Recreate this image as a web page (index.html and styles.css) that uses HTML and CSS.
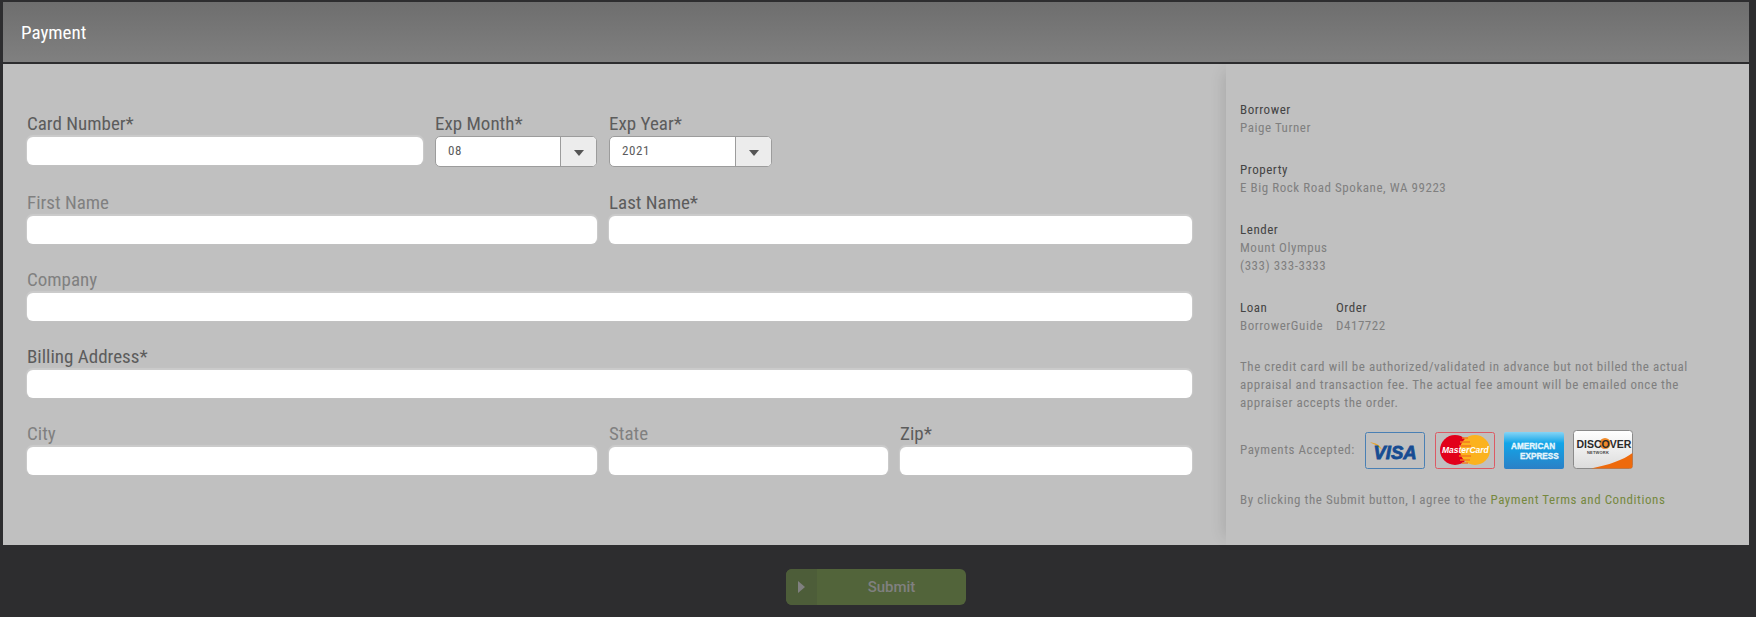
FILE: index.html
```html
<!DOCTYPE html>
<html lang="en">
<head>
  <meta charset="UTF-8">
  <title>Payment</title>
  <link rel="stylesheet" href="styles.css">
</head>
<body>
  <div class="panel">
    <div class="panel-head">Payment</div>
    <div class="panel-body">
      <form class="form">
        <div class="row row-card">
          <div class="field field-card">
            <label>Card Number*</label>
            <input type="text">
          </div>
          <div class="field field-exp">
            <label>Exp Month*</label>
            <div class="select"><span class="select-value">08</span><span class="select-arrow"></span></div>
          </div>
          <div class="field field-exp">
            <label>Exp Year*</label>
            <div class="select"><span class="select-value">2021</span><span class="select-arrow"></span></div>
          </div>
        </div>
        <div class="row row-name">
          <div class="field">
            <label class="optional">First Name</label>
            <input type="text">
          </div>
          <div class="field">
            <label>Last Name*</label>
            <input type="text">
          </div>
        </div>
        <div class="row">
          <div class="field">
            <label class="optional">Company</label>
            <input type="text">
          </div>
        </div>
        <div class="row">
          <div class="field">
            <label>Billing Address*</label>
            <input type="text">
          </div>
        </div>
        <div class="row row-city">
          <div class="field">
            <label class="optional">City</label>
            <input type="text">
          </div>
          <div class="field">
            <label class="optional">State</label>
            <input type="text">
          </div>
          <div class="field">
            <label>Zip*</label>
            <input type="text">
          </div>
        </div>
      </form>

      <div class="side">
        <div class="info">
          <h4>Borrower</h4>
          <p>Paige Turner</p>
        </div>
        <div class="info">
          <h4>Property</h4>
          <p>E Big Rock Road Spokane, WA 99223</p>
        </div>
        <div class="info">
          <h4>Lender</h4>
          <p>Mount Olympus</p>
          <p>(333) 333-3333</p>
        </div>
        <div class="info info-pair">
          <div class="info-loan">
            <h4>Loan</h4>
            <p>BorrowerGuide</p>
          </div>
          <div>
            <h4>Order</h4>
            <p>D417722</p>
          </div>
        </div>
        <p class="note">The credit card will be authorized/validated in advance but not billed the actual appraisal and transaction fee. The actual fee amount will be emailed once the appraiser accepts the order.</p>
        <div class="accepted">
          <span class="accepted-label">Payments Accepted:</span>
          <svg class="card card-visa" viewBox="0 0 60 37">
            <rect x="0.5" y="0.5" width="59" height="36" rx="2" fill="none" stroke="#4a80b4"/>
            <path d="M5 10.5 C10 10.5 15 12.5 17 18 C14 14.5 10 12.5 5 10.5Z" fill="#e8a42a"/>
            <text x="8.5" y="27" class="visa-text">VISA</text>
          </svg>
          <svg class="card" viewBox="0 0 60 37">
            <rect x="0.5" y="0.5" width="59" height="36" rx="2" fill="none" stroke="#dc5a64"/>
            <circle cx="20" cy="18" r="15" fill="#e2001a"/>
            <circle cx="40" cy="18" r="15" fill="#fbb21e"/>
            <path d="M27 6h6M25 10h10M24 14h12M24 24h12M25 28h10M27 31h6" stroke="#f47a20" stroke-width="1.6"/>
            <text x="7" y="21" class="mc-text">MasterCard</text>
          </svg>
          <svg class="card" viewBox="0 0 60 37">
            <defs>
              <linearGradient id="amexBg" x1="0" y1="0" x2="0" y2="1">
                <stop offset="0" stop-color="#86d4f5"/>
                <stop offset="0.3" stop-color="#12a5e8"/>
                <stop offset="1" stop-color="#2b80c6"/>
              </linearGradient>
            </defs>
            <rect width="60" height="37" rx="2" fill="url(#amexBg)"/>
            <text x="7" y="17" class="amex-text">AMERICAN</text>
            <text x="16" y="27" class="amex-text">EXPRESS</text>
          </svg>
          <svg class="card card-tall" viewBox="0 0 60 39">
            <defs>
              <linearGradient id="discBg" x1="0" y1="0" x2="0" y2="1">
                <stop offset="0" stop-color="#ffffff"/>
                <stop offset="1" stop-color="#dcdcdc"/>
              </linearGradient>
            </defs>
            <rect x="0.5" y="0.5" width="59" height="38" rx="3" fill="url(#discBg)" stroke="#8a8a8a"/>
            <path d="M18 38.5 C36 35 50 30 59.5 23 V36 a2.5 2.5 0 0 1 -2.5 2.5Z" fill="#ee6a0c"/>
            <circle cx="32" cy="13.5" r="5.5" fill="#f08a2a"/>
            <text x="3.5" y="17.5" class="disc-text">DISCOVER</text>
            <text x="25" y="23.5" class="disc-sub">NETWORK</text>
          </svg>
        </div>
        <p class="terms">By clicking the Submit button, I agree to the <a href="#">Payment Terms and Conditions</a></p>
      </div>
    </div>
  </div>

  <div class="actions">
    <button class="submit" type="button" disabled>
      <span class="submit-icon"></span>
      <span class="submit-text">Submit</span>
    </button>
  </div>
</body>
</html>
```

FILE: styles.css
```css
* {
  box-sizing: border-box;
}
body {
  margin: 0;
  padding: 2px 7px 0 3px;
  background: #2d2d2f;
  font-family: "Roboto", sans-serif;
}
.panel {
  background: #c0c0c0;
}
.panel-head {
  height: 62px;
  padding-left: 18px;
  background: linear-gradient(#6e6e6e, #808080);
  border-bottom: 2px solid #2d2d2f;
  color: #fff;
  font-size: 19px;
  font-stretch: 75%;
  font-weight: 400;
  line-height: 61px;
}
.panel-body {
  display: flex;
}

/* left form */
.form {
  width: 1223px;
  padding: 48px 34px 70px 24px;
}
.row {
  display: grid;
  grid-template-columns: 1fr;
  column-gap: 12px;
  margin-bottom: 25px;
}
.row:last-child {
  margin-bottom: 0;
}
.row-card {
  grid-template-columns: 396px 162px 163px;
}
.row-name {
  grid-template-columns: 570px 583px;
}
.row-city {
  grid-template-columns: 570px 279px 292px;
}
.field label {
  display: block;
  height: 24px;
  color: #5c5c5c;
  font-size: 19px;
  font-stretch: 75%;
  line-height: 22px;
}
.field label.optional {
  color: #808080;
}
.field-card label {
  height: 25px;
  line-height: 23px;
}
.field-exp label {
  line-height: 24px;
}
.field input {
  display: block;
  width: 100%;
  height: 28px;
  border: none;
  border-radius: 6px;
  background: #fff;
  box-shadow: 0 -1px 1px 1px #cbcbcb;
}
.select {
  display: flex;
  height: 31px;
  border: 1px solid #9c9c9c;
  border-radius: 5px;
  background: #fff;
  overflow: hidden;
}
.select-value {
  flex: 1;
  padding-left: 12px;
  color: #5c5c5c;
  font-size: 13px;
  font-stretch: 75%;
  letter-spacing: 0.55px;
  line-height: 28px;
}
.select-arrow {
  display: flex;
  align-items: center;
  justify-content: center;
  width: 36px;
  border-left: 1px solid #9c9c9c;
  background: #ececec;
}
.select-arrow::after {
  content: "";
  border-top: 6px solid #555;
  border-left: 5px solid transparent;
  border-right: 5px solid transparent;
  margin-top: 2px;
}

/* right summary */
.side {
  flex: 1;
  padding: 37px 14px 0;
  box-shadow: -10px 0 14px -8px rgba(0, 0, 0, 0.12);
  font-size: 13px;
  font-stretch: 75%;
  letter-spacing: 0.55px;
  line-height: 18px;
  color: #7f7f7f;
}
.info {
  margin-bottom: 24px;
}
.info h4 {
  margin: 0;
  color: #444;
  font-weight: 400;
}
.info p {
  margin: 0;
}
.info-pair {
  display: flex;
  margin-bottom: 23px;
}
.info-loan {
  width: 96px;
}
.note {
  margin: 0;
  width: 450px;
}
.accepted {
  display: flex;
  align-items: center;
  height: 39px;
  margin-top: 18px;
}
.accepted-label {
  width: 125px;
}
.card {
  width: 60px;
  height: 37px;
  margin-right: 9px;
  margin-top: 2px;
}
.card-visa {
  margin-right: 10px;
}
.card-tall {
  height: 39px;
  margin-top: 0;
}
.terms {
  margin: 22px 0 0;
}
.terms a {
  color: #76883f;
  text-decoration: none;
}

/* logos text */
.visa-text {
  fill: #174c92;
  stroke: #174c92;
  stroke-width: 0.8px;
  font: italic 700 18.5px "Liberation Sans", sans-serif;
  letter-spacing: 0;
}
.mc-text {
  fill: #fff;
  font: italic 700 8.5px "Liberation Sans", sans-serif;
  letter-spacing: 0;
}
.amex-text {
  fill: #d6f0fc;
  stroke: #fff;
  stroke-width: 0.3px;
  font: 700 8.2px "Liberation Sans", sans-serif;
  letter-spacing: 0;
}
.disc-text {
  fill: #2a2a2a;
  font: 700 10.5px "Liberation Sans", sans-serif;
  letter-spacing: 0;
}
.disc-sub {
  fill: #444;
  font: 700 4px "Liberation Sans", sans-serif;
  letter-spacing: 0.2px;
  text-anchor: middle;
}

/* submit */
.actions {
  display: flex;
  justify-content: center;
  padding-top: 24px;
}
.submit {
  display: flex;
  width: 180px;
  height: 36px;
  padding: 0;
  border: none;
  border-radius: 6px;
  background: #52643a;
  overflow: hidden;
}
.submit-icon {
  display: flex;
  align-items: center;
  justify-content: center;
  width: 31px;
  height: 100%;
  background: #4d5d39;
}
.submit-icon::after {
  content: "";
  border-left: 7px solid #808080;
  border-top: 6px solid transparent;
  border-bottom: 6px solid transparent;
}
.submit-text {
  flex: 1;
  color: #808080;
  font-size: 15px;
  font-weight: 500;
  line-height: 36px;
  text-align: center;
  font-family: "Roboto", sans-serif;
}
```
